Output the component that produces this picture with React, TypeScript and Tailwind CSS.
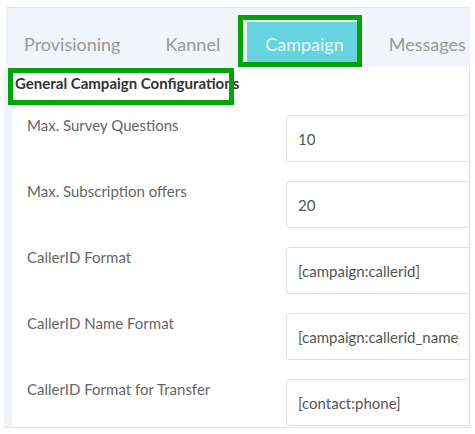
import React from 'react';

const fields = [
  { label: 'Max. Survey Questions', value: '10' },
  { label: 'Max. Subscription offers', value: '20' },
  { label: 'CallerID Format', value: '[campaign:callerid]' },
  { label: 'CallerID Name Format', value: '[campaign:callerid_name]' },
  { label: 'CallerID Format for Transfer', value: '[contact:phone]' },
];

const tabs = ['Provisioning', 'Kannel', 'Campaign', 'Messages'];

const App: React.FC = () => {
  return (
    <div className="relative w-[475px] h-[434px] bg-white overflow-hidden" style={{ fontFamily: 'Lato, "Open Sans", sans-serif' }}>
      <div className="pt-[7px] pl-[6px] w-[470px]">
        {/* tab bar */}
        <div className="h-[60px] bg-[#f1f4f8] border-t border-[#e2e6ea] flex items-stretch gap-[9px] pt-[14px] pb-[4px] whitespace-nowrap">
          {tabs.map((t) => (
            <div
              key={t}
              className={
                t === 'Campaign'
                  ? 'px-[18px] pt-[3px] flex items-center bg-[#67d3df] text-[#e8f8fa] text-[18px]'
                  : 'px-[18px] pt-[3px] flex items-center text-[#999999] text-[18px]'
              }
            >
              {t}
            </div>
          ))}
        </div>
      </div>

      {/* panel */}
      <div className="ml-[4px] w-[466px] flex border-r border-b border-[#e6e6e6]">
        <div className="w-[8px] bg-[#f0f3f7] shrink-0" />
        <div className="flex-1 overflow-hidden pb-[1px]">
          <div className="h-[48px] flex items-start pt-[5px] pl-[3px] text-[15px] font-bold text-[#333333] whitespace-nowrap">
            General Campaign Configurations
          </div>
          <div className="flex flex-col gap-[19px]">
            {fields.map((f) => (
              <div key={f.label} className="flex items-start">
                <div className="w-[274px] shrink-0 pl-[15px] text-[15px] leading-[20px] text-[#666666] whitespace-nowrap">{f.label}</div>
                <input
                  readOnly
                  defaultValue={f.value}
                  className="w-[185px] shrink-0 h-[47px] border border-[#dddddd] rounded-[4px] px-[11px] text-[15px] text-[#555555] bg-white outline-none"
                  style={{ fontFamily: 'Lato, "Open Sans", sans-serif' }}
                />
              </div>
            ))}
          </div>
        </div>
      </div>

      {/* annotation boxes */}
      <div className="absolute left-[238px] top-[15px] w-[124px] h-[52px] border-[5px] border-[#02a20b]" />
      <div className="absolute left-[8px] top-[68px] w-[226px] h-[37px] border-[5px] border-[#02a20b]" />
    </div>
  );
};

export default App;
